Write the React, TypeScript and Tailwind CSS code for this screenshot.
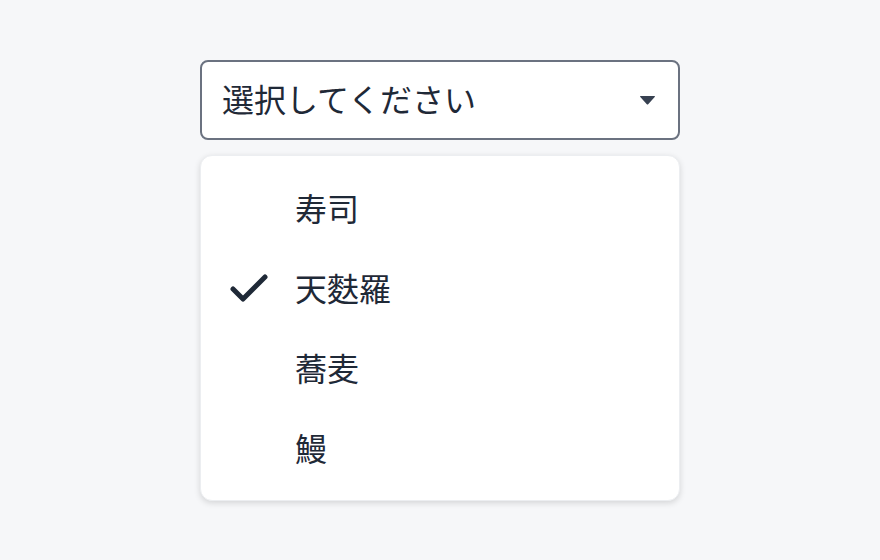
import React from "react";
import { Check } from "lucide-react";

const items = [
  { label: "寿司", selected: false },
  { label: "天麩羅", selected: true },
  { label: "蕎麦", selected: false },
  { label: "鰻", selected: false },
];

const App = () => {
  return (
    <div
      className="w-full min-h-[560px] bg-[#f6f7f9] flex justify-center pt-[60px]"
      style={{ fontFamily: '"Noto Sans CJK JP", "Noto Sans", sans-serif' }}
    >
      <div className="w-[480px] flex flex-col gap-[15px]">
        <div className="h-20 bg-white border-2 border-[#6b7280] rounded-lg flex items-center justify-between pl-5 pr-[22px]">
          <span className="text-[32px] text-[#1f2937] leading-none -mt-1">選択してください</span>
          <svg width="17" height="11" viewBox="0 0 17 11" className="text-[#374151]">
            <path
              d="M1.8 1 H15.2 Q16.6 1 15.7 2.1 L9.4 9 Q8.5 10 7.6 9 L1.3 2.1 Q0.4 1 1.8 1 Z"
              fill="currentColor"
            />
          </svg>
        </div>
        <div className="bg-white rounded-xl shadow-[0_2px_6px_rgba(0,0,0,0.14)] border border-[#eceef1] pt-[13px] pb-[11px]">
          {items.map((item) => (
            <div key={item.label} className="h-20 flex items-center">
              <div className="w-24 flex justify-center">
                {item.selected && (
                  <Check className="w-12 h-12 text-[#1f2937]" strokeWidth={2.5} />
                )}
              </div>
              <span className="text-[32px] text-[#1f2937] leading-none -mt-1 -ml-0.5">{item.label}</span>
            </div>
          ))}
        </div>
      </div>
    </div>
  );
};

export default App;
